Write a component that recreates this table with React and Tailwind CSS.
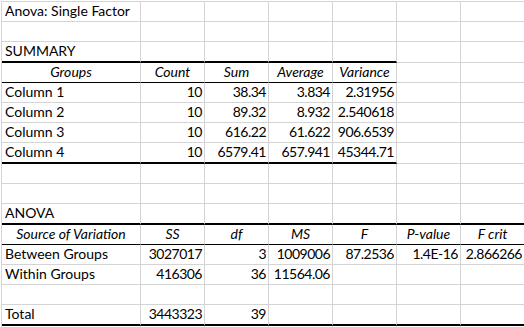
import React from "react";

const WIDTHS = ["w-[139px]", "w-[64px]", "w-[64px]", "w-[64px]", "w-[64px]", "w-[64px]", "w-[64px]"];

const BOTTOM = {
  grid: "border-b border-b-[#d4d4d4]",
  thin: "border-b border-b-black",
  thick: "border-b-2 border-b-black",
};

function Row({ h = "h-[20px]", cells = [], bottoms = [], kinds = [] }) {
  return (
    <div className={`flex ${h}`}>
      {WIDTHS.map((w, i) => {
        const v = cells[i];
        const kind = kinds[i] || (/^[\d.E-]+$/.test(v || "x") ? "num" : "text");
        const b = BOTTOM[bottoms[i] || "grid"];
        const align =
          kind === "head"
            ? "justify-center italic"
            : kind === "num"
            ? "justify-end pr-[2px] tracking-[-0.5px]"
            : "justify-start pl-[3px]";
        return (
          <div
            key={i}
            className={`${w} shrink-0 h-full border-r border-r-[#d4d4d4] ${b} flex items-end pb-[3px] ${align} whitespace-nowrap overflow-visible`}
          >
            {v !== undefined && v !== null ? <span className="leading-none">{v}</span> : null}
          </div>
        );
      })}
    </div>
  );
}

const S5 = ["thick", "thick", "thick", "thick", "thick"];
const T5 = ["thin", "thin", "thin", "thin", "thin"];
const S7 = ["thick", "thick", "thick", "thick", "thick", "thick", "thick"];
const T7 = ["thin", "thin", "thin", "thin", "thin", "thin", "thin"];
const H5 = ["head", "head", "head", "head", "head"];
const H7 = ["head", "head", "head", "head", "head", "head", "head"];

export default function App() {
  return (
    <div className="w-[524px] h-[327px] overflow-hidden bg-white text-black text-[14px] font-['Lato',sans-serif]">
      <div className="ml-[1px] mt-[1px] border-l border-t border-[#d4d4d4]">
        <Row cells={["Anova: Single Factor"]} />
        <Row />
        <Row h="h-[21px]" cells={["SUMMARY"]} bottoms={S5} />
        <Row cells={["Groups", "Count", "Sum", "Average", "Variance"]} kinds={H5} bottoms={T5} />
        <Row cells={["Column 1", "10", "38.34", "3.834", "2.31956"]} />
        <Row cells={["Column 2", "10", "89.32", "8.932", "2.540618"]} />
        <Row cells={["Column 3", "10", "616.22", "61.622", "906.6539"]} />
        <Row h="h-[21px]" cells={["Column 4", "10", "6579.41", "657.941", "45344.71"]} bottoms={S5} />
        <Row />
        <Row />
        <Row h="h-[21px]" cells={["ANOVA"]} bottoms={S7} />
        <Row
          cells={["Source of Variation", "SS", "df", "MS", "F", "P-value", "F crit"]}
          kinds={H7}
          bottoms={T7}
        />
        <Row cells={["Between Groups", "3027017", "3", "1009006", "87.2536", "1.4E-16", "2.866266"]} />
        <Row cells={["Within Groups", "416306", "36", "11564.06"]} />
        <Row />
        <Row h="h-[21px]" cells={["Total", "3443323", "39"]} bottoms={S7} />
        <Row />
      </div>
    </div>
  );
}
